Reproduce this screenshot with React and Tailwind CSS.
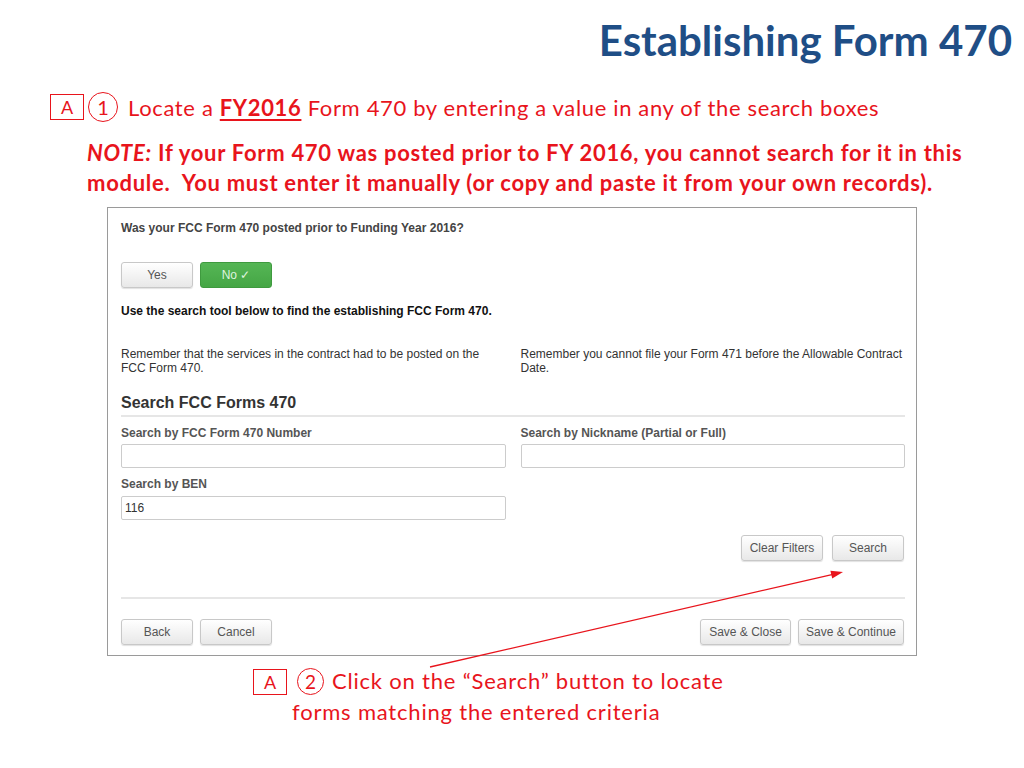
import React from "react";

const btn =
  "h-[26px] flex items-center justify-center rounded-[3px] border border-[#c8c8c8] bg-gradient-to-b from-white to-[#e8e8e8] text-[12px] text-[#555] shadow-[0_1px_1px_rgba(0,0,0,0.12)]";

function Circled({ n, size }) {
  return (
    <span
      className={`inline-flex items-center justify-center rounded-full border-[1.5px] border-[#e8141c] ${size} leading-none`}
    >
      {n}
    </span>
  );
}

export default function App() {
  return (
    <div className="relative w-[1024px] h-[768px] bg-white overflow-hidden font-['Lato',sans-serif] text-[#e8141c]">
      {/* Title */}
      <div className="flex justify-end pr-[12px] pt-[15px] h-[80px]">
        <h1 className="font-bold text-[42px] leading-[50px] text-[#1f4e86]">
          Establishing Form 470
        </h1>
      </div>

      {/* Step 1 */}
      <div className="mt-[12px] flex items-center pl-[50px] h-[30px]">
        <div className="w-[34px] h-[26px] border border-[#e8141c] flex items-center justify-center text-[18px]">
          A
        </div>
        <span className="ml-[4px]">
          <Circled n="1" size="w-[30px] h-[30px] text-[20px]" />
        </span>
        <span className="ml-[10px] text-[22px] whitespace-nowrap tracking-[0.65px]">
          Locate a <span className="font-bold underline underline-offset-[3px]">FY2016</span> Form 470 by
          entering a value in any of the search boxes
        </span>
      </div>

      {/* Note */}
      <div className="mt-[16px] pl-[87px] text-[22px] leading-[30px] font-bold whitespace-nowrap tracking-[0.72px]">
        <span className="italic">NOTE:</span> If your Form 470 was posted prior to FY 2016, you cannot search
        for it in this
        <br />
        module.&nbsp; You must enter it manually (or copy and paste it from your own records).
      </div>

      {/* Screenshot */}
      <div className="mt-[9px] ml-[107px] w-[810px] h-[449px] border border-[#9a9a9a] pl-[13px] pr-[11px] pt-[12px] flex flex-col font-['Liberation_Sans',Arial,sans-serif] text-[12px] text-[#333]">
        <div className="leading-[16px] font-bold text-[#444]">
          Was your FCC Form 470 posted prior to Funding Year 2016?
        </div>
        <div className="mt-[26px] flex gap-[7px]">
          <div className={`${btn} w-[72px]`}>Yes</div>
          <div className="w-[72px] h-[26px] flex items-center justify-center rounded-[3px] border border-[#3f9a3f] bg-gradient-to-b from-[#55b655] to-[#45a645] text-[12px] text-[#dff3df]">
            No ✓
          </div>
        </div>
        <div className="mt-[15px] leading-[16px] font-bold text-[#111]">
          Use the search tool below to find the establishing FCC Form 470.
        </div>
        <div className="mt-[28px] grid grid-cols-2 gap-[15px] leading-[14px] text-[#333]">
          <div>Remember that the services in the contract had to be posted on the FCC Form 470.</div>
          <div>Remember you cannot file your Form 471 before the Allowable Contract Date.</div>
        </div>
        <div className="mt-[18px] leading-[20px] text-[16px] font-bold text-[#333]">Search FCC Forms 470</div>
        <div className="mt-[2px] border-t-2 border-[#e6e6e6]" />
        <div className="mt-[8px] grid grid-cols-2 gap-x-[15px] font-bold text-[#555]">
          <div className="leading-[16px]">Search by FCC Form 470 Number</div>
          <div className="leading-[16px]">Search by Nickname (Partial or Full)</div>
          <div className="mt-[3px] h-[24px] border border-[#ccc] rounded-[2px] bg-white" />
          <div className="mt-[3px] h-[24px] border border-[#ccc] rounded-[2px] bg-white" />
          <div className="mt-[8px] leading-[16px]">Search by BEN</div>
          <div />
          <div className="mt-[4px] h-[24px] border border-[#ccc] rounded-[2px] bg-white flex items-center pl-[3px] font-normal text-[#333]">
            116
          </div>
          <div />
        </div>
        <div className="mt-[15px] flex justify-end gap-[9px] pr-[1px]">
          <div className={`${btn} w-[82px]`}>Clear Filters</div>
          <div className={`${btn} w-[72px]`}>Search</div>
        </div>
        <div className="mt-[36px] border-t-2 border-[#e6e6e6]" />
        <div className="mt-[20px] flex items-center pr-[1px]">
          <div className={`${btn} w-[72px]`}>Back</div>
          <div className={`${btn} w-[72px] ml-[7px]`}>Cancel</div>
          <div className="flex-1" />
          <div className={`${btn} w-[91px]`}>Save &amp; Close</div>
          <div className={`${btn} w-[106px] ml-[7px]`}>Save &amp; Continue</div>
        </div>
      </div>

      {/* Step 2 */}
      <div className="mt-[13px] flex items-start pl-[253px]">
        <div className="w-[34px] h-[26px] border border-[#e8141c] flex items-center justify-center text-[18px]">
          A
        </div>
        <div className="ml-[5px] text-[22px] leading-[31px] -mt-[4px] whitespace-nowrap tracking-[0.8px]">
          <span className="inline-flex align-middle ml-[5px] mr-[8px] -mt-[4px] tracking-normal">
            <Circled n="2" size="w-[27px] h-[27px] text-[19px]" />
          </span>
          Click on the “Search” button to locate
          <br />
          forms matching the entered criteria
        </div>
      </div>

      {/* Arrow */}
      <svg className="absolute inset-0 pointer-events-none" width="1024" height="768" viewBox="0 0 1024 768">
        <line x1="430" y1="667" x2="833" y2="574.3" stroke="#e8141c" strokeWidth="1.3" />
        <polygon points="843,572 832.2,578.6 830.4,570.8" fill="#e8141c" />
      </svg>
    </div>
  );
}
